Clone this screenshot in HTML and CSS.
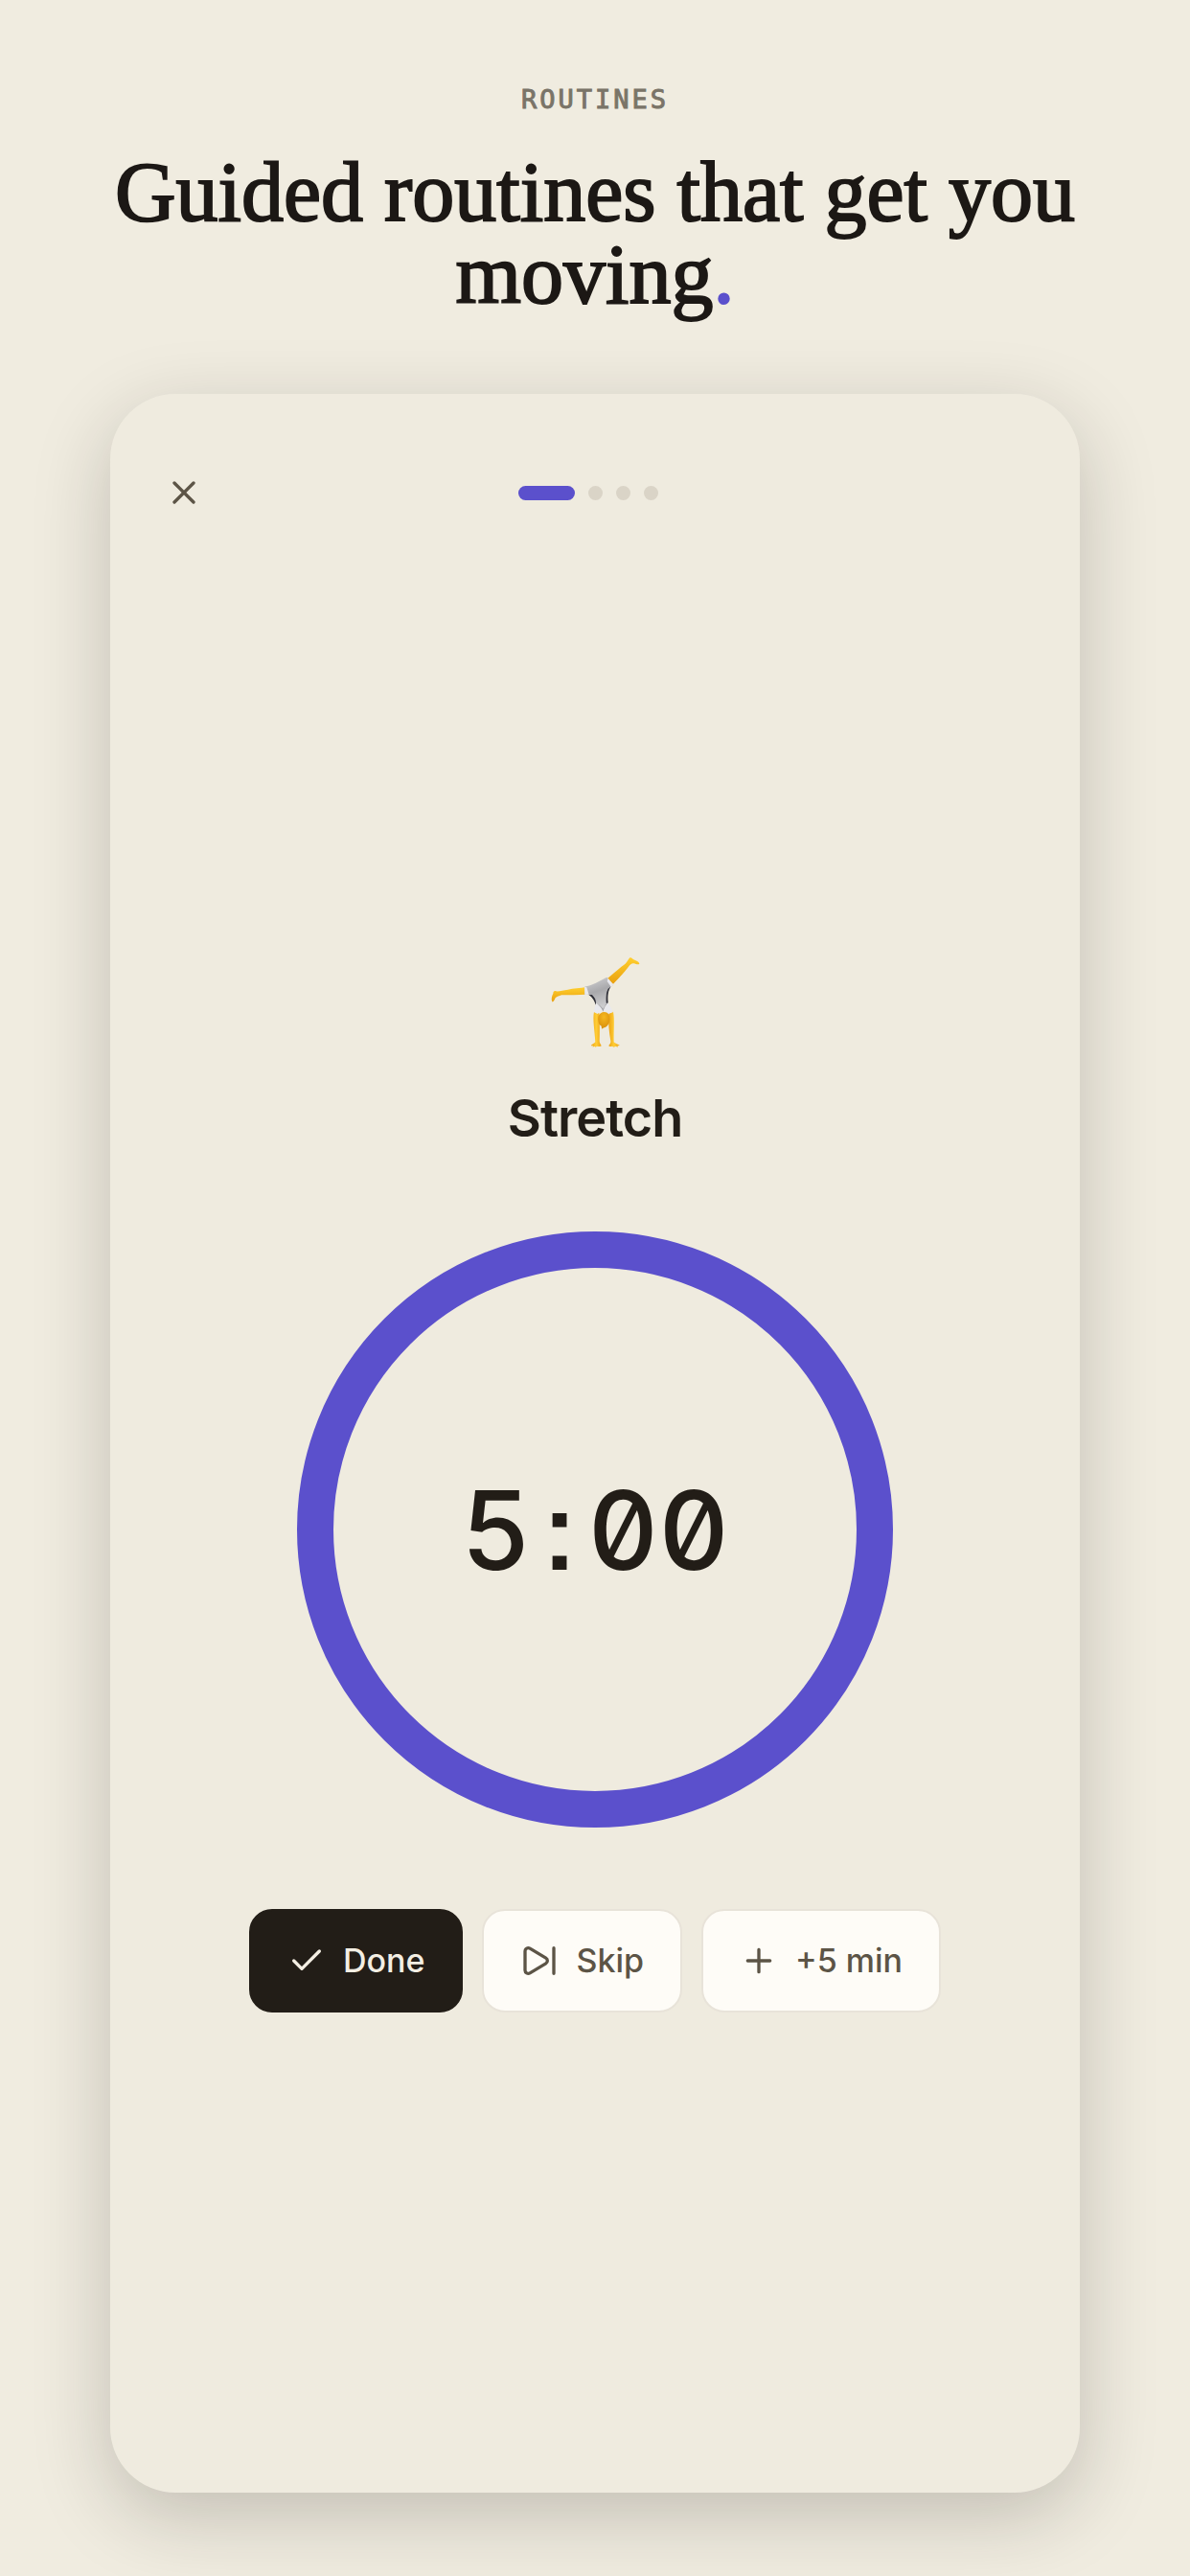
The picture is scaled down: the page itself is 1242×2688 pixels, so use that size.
FILE: index.html
```html
<!DOCTYPE html>
<html lang="en">
<head>
    <meta charset="UTF-8">
    <meta name="viewport" content="width=device-width, initial-scale=1.0">
    <title>Routines</title>
    <link rel="stylesheet" href="styles.css">
</head>
<body>
    <header class="intro">
        <p class="eyebrow">ROUTINES</p>
        <h1>Guided routines that get you moving<span class="dot">.</span></h1>
    </header>

    <main class="card">
        <div class="top-bar">
            <button type="button" class="close" aria-label="Close">
                <svg class="icon" viewBox="0 0 24 24"><path d="M18 6 6 18M6 6l12 12"/></svg>
            </button>
            <div class="steps">
                <span class="step active"></span>
                <span class="step"></span>
                <span class="step"></span>
                <span class="step"></span>
            </div>
            <span class="spacer"></span>
        </div>

        <section class="task">
            <!-- cartwheel figure -->
            <svg class="figure" viewBox="69 55 288 288" aria-hidden="true">
                <defs>
                    <linearGradient id="skin" x1="0" y1="0" x2="0" y2="1">
                        <stop offset="0" stop-color="#ffcf2e"/>
                        <stop offset="1" stop-color="#e9a00f"/>
                    </linearGradient>
                    <linearGradient id="arm" x1="0" y1="0" x2="1" y2="0">
                        <stop offset="0" stop-color="#eda314"/>
                        <stop offset="0.5" stop-color="#ffcd35"/>
                        <stop offset="1" stop-color="#eda314"/>
                    </linearGradient>
                    <linearGradient id="suit" x1="0" y1="0" x2="0.3" y2="1">
                        <stop offset="0" stop-color="#d6d6d8"/>
                        <stop offset="0.5" stop-color="#a9a9ac"/>
                        <stop offset="1" stop-color="#cfcfd1"/>
                    </linearGradient>
                    <radialGradient id="hair" cx="0.5" cy="0.3" r="0.7">
                        <stop offset="0" stop-color="#f6b821"/>
                        <stop offset="1" stop-color="#d98f0c"/>
                    </radialGradient>
                </defs>
                <path fill="url(#skin)" d="M186 154C165 157 146 158 128 162C114 163 102 168 91 167C86 164 82 168 82 174C78 182 75 191 79 200C83 201 85 196 89 188C94 183 101 182 108 179C134 178 160 179 184 177Z"/>
                <path fill="url(#skin)" d="M251 128C267 115 287 96 307 82C314 76 317 68 322 62C327 60 330 65 334 68C343 72 352 76 352 81C349 85 342 82 334 80C328 79 323 84 318 90C303 110 286 128 270 144Z"/>
                <path fill="url(#arm)" d="M210 231C205 255 212 288 214 326C209 332 201 334 201 338L207 338L206 342L211 339L215 342L219 339C225 340 231 341 233 338C230 332 227 328 227 323C228 294 228 264 226 235Z"/>
                <path fill="url(#arm)" d="M270 231C275 255 271 288 272 326C278 332 288 334 290 337L284 338L284 342L278 339L272 342L267 339C261 341 257 340 256 337C260 333 263 328 262 323C257 294 254 264 256 235Z"/>
                <path fill="#303039" d="M190 176C205 185 211 197 215 209L221 217L216 190L202 174ZM253 152L263 152C254 165 252 181 254 203L246 213L247 172Z"/>
                <path fill="url(#suit)" d="M180 153C204 148 224 137 250 123L270 147L254 159C246 174 247 193 249 207L238 229L216 207C217 196 213 187 204 178L181 178Z"/>
                <path fill="#e9e9ed" d="M180 153L187 155L194 177L181 178ZM254 126L271 147L263 153L251 136ZM217 204C213 214 210 224 209 232L221 238L238 225ZM252 203C259 211 266 222 269 233L255 238L238 228Z"/>
                <path fill="#a2a2a6" d="M222 205C228 214 236 222 238 231C241 220 246 212 248 204L245 210L239 222Z"/>
                <path fill="url(#hair)" d="M241 232C228 234 221 244 223 258C224 268 227 273 233 276L234 284C237 286 239 281 242 281C247 280 250 277 254 272C260 265 260 250 257 241C254 235 249 232 241 232Z"/>
            </svg>
            <h2>Stretch</h2>

            <div class="timer">
                <time class="time" datetime="PT5M">5<span class="colon">:</span>00</time>
            </div>

            <div class="actions">
                <button type="button" class="btn primary">
                    <svg class="icon" viewBox="0 0 24 24"><path d="M20 6 9 17l-5-5"/></svg>
                    Done
                </button>
                <button type="button" class="btn">
                    <svg class="icon" viewBox="0 0 24 24"><path d="M21 4v16M6.029 4.285A2 2 0 0 0 3 6v12a2 2 0 0 0 3.029 1.715l9.997-5.998a2 2 0 0 0 .003-3.432z"/></svg>
                    Skip
                </button>
                <button type="button" class="btn">
                    <svg class="icon" viewBox="0 0 24 24"><path d="M5 12h14M12 5v14"/></svg>
                    +5 min
                </button>
            </div>
        </section>
    </main>
</body>
</html>
```
FILE: styles.css
```css
* {
    box-sizing: border-box;
}

body {
    margin: 0;
    min-height: 100vh;
    padding: 86px 115px 87px;
    display: flex;
    flex-direction: column;
    background: #f0ece0;
    color: #221d17;
    font-family: Inter, "Liberation Sans", sans-serif;
}

/* Heading above the card */
.intro {
    margin-bottom: 81px;
    text-align: center;
}

.eyebrow {
    margin: 0 0 36px;
    color: #7a7468;
    font-family: "DejaVu Sans Mono", monospace;
    font-size: 27px;
    line-height: 36px;
    letter-spacing: 3px;
    -webkit-text-stroke: 1px currentColor;
}

h1 {
    margin: 0;
    color: #1c1815;
    font-family: "Liberation Serif", serif;
    font-size: 88px;
    font-weight: normal;
    line-height: 86px;
    -webkit-text-stroke: 2px currentColor;
}

.dot {
    color: #5b50cc;
}

/* Card */
.card {
    flex: 1;
    display: flex;
    flex-direction: column;
    padding: 83px 57px 38px;
    border-radius: 68px;
    background: #efebdf;
    box-shadow: 0 24px 80px rgba(34, 29, 23, 0.22);
}

.top-bar {
    display: flex;
    align-items: center;
    justify-content: space-between;
}

.close {
    display: flex;
    padding: 0;
    border: none;
    background: none;
    color: #5c5446;
    cursor: pointer;
}

.icon {
    width: 40px;
    height: 40px;
    fill: none;
    stroke: currentColor;
    stroke-width: 2;
    stroke-linecap: round;
    stroke-linejoin: round;
}

.steps {
    display: flex;
    gap: 14px;
}

.step {
    width: 15px;
    height: 15px;
    border-radius: 8px;
    background: #dad4c7;
}

.step.active {
    width: 59px;
    background: #5b50cc;
}

.spacer {
    width: 55px;
}

/* Current task */
.task {
    flex: 1;
    display: flex;
    flex-direction: column;
    align-items: center;
    justify-content: center;
}

.figure {
    width: 96px;
    height: 96px;
}

h2 {
    margin: 40px 0 84px;
    font-size: 54px;
    font-weight: 600;
    line-height: 68px;
    letter-spacing: -1px;
}

.timer {
    width: 622px;
    aspect-ratio: 1;
    display: flex;
    align-items: center;
    justify-content: center;
    border: 38px solid #5b50cc;
    border-radius: 50%;
}

.time {
    font-size: 114px;
    font-weight: 500;
    font-feature-settings: "tnum", "zero", "ss07", "calt" 0;
}

.colon {
    padding: 0 14px;
}

/* Buttons */
.actions {
    display: flex;
    gap: 20px;
    margin-top: 85px;
}

.btn {
    display: flex;
    align-items: center;
    gap: 18px;
    padding: 32px 38px;
    border: 2px solid #e8e3d9;
    border-radius: 24px;
    background: #fefcf7;
    color: #5c5446;
    font-family: inherit;
    font-size: 34px;
    font-weight: 500;
    line-height: 40px;
    cursor: pointer;
}

.btn.primary {
    border-color: #221d17;
    background: #221d17;
    color: #f3eee3;
}
```
